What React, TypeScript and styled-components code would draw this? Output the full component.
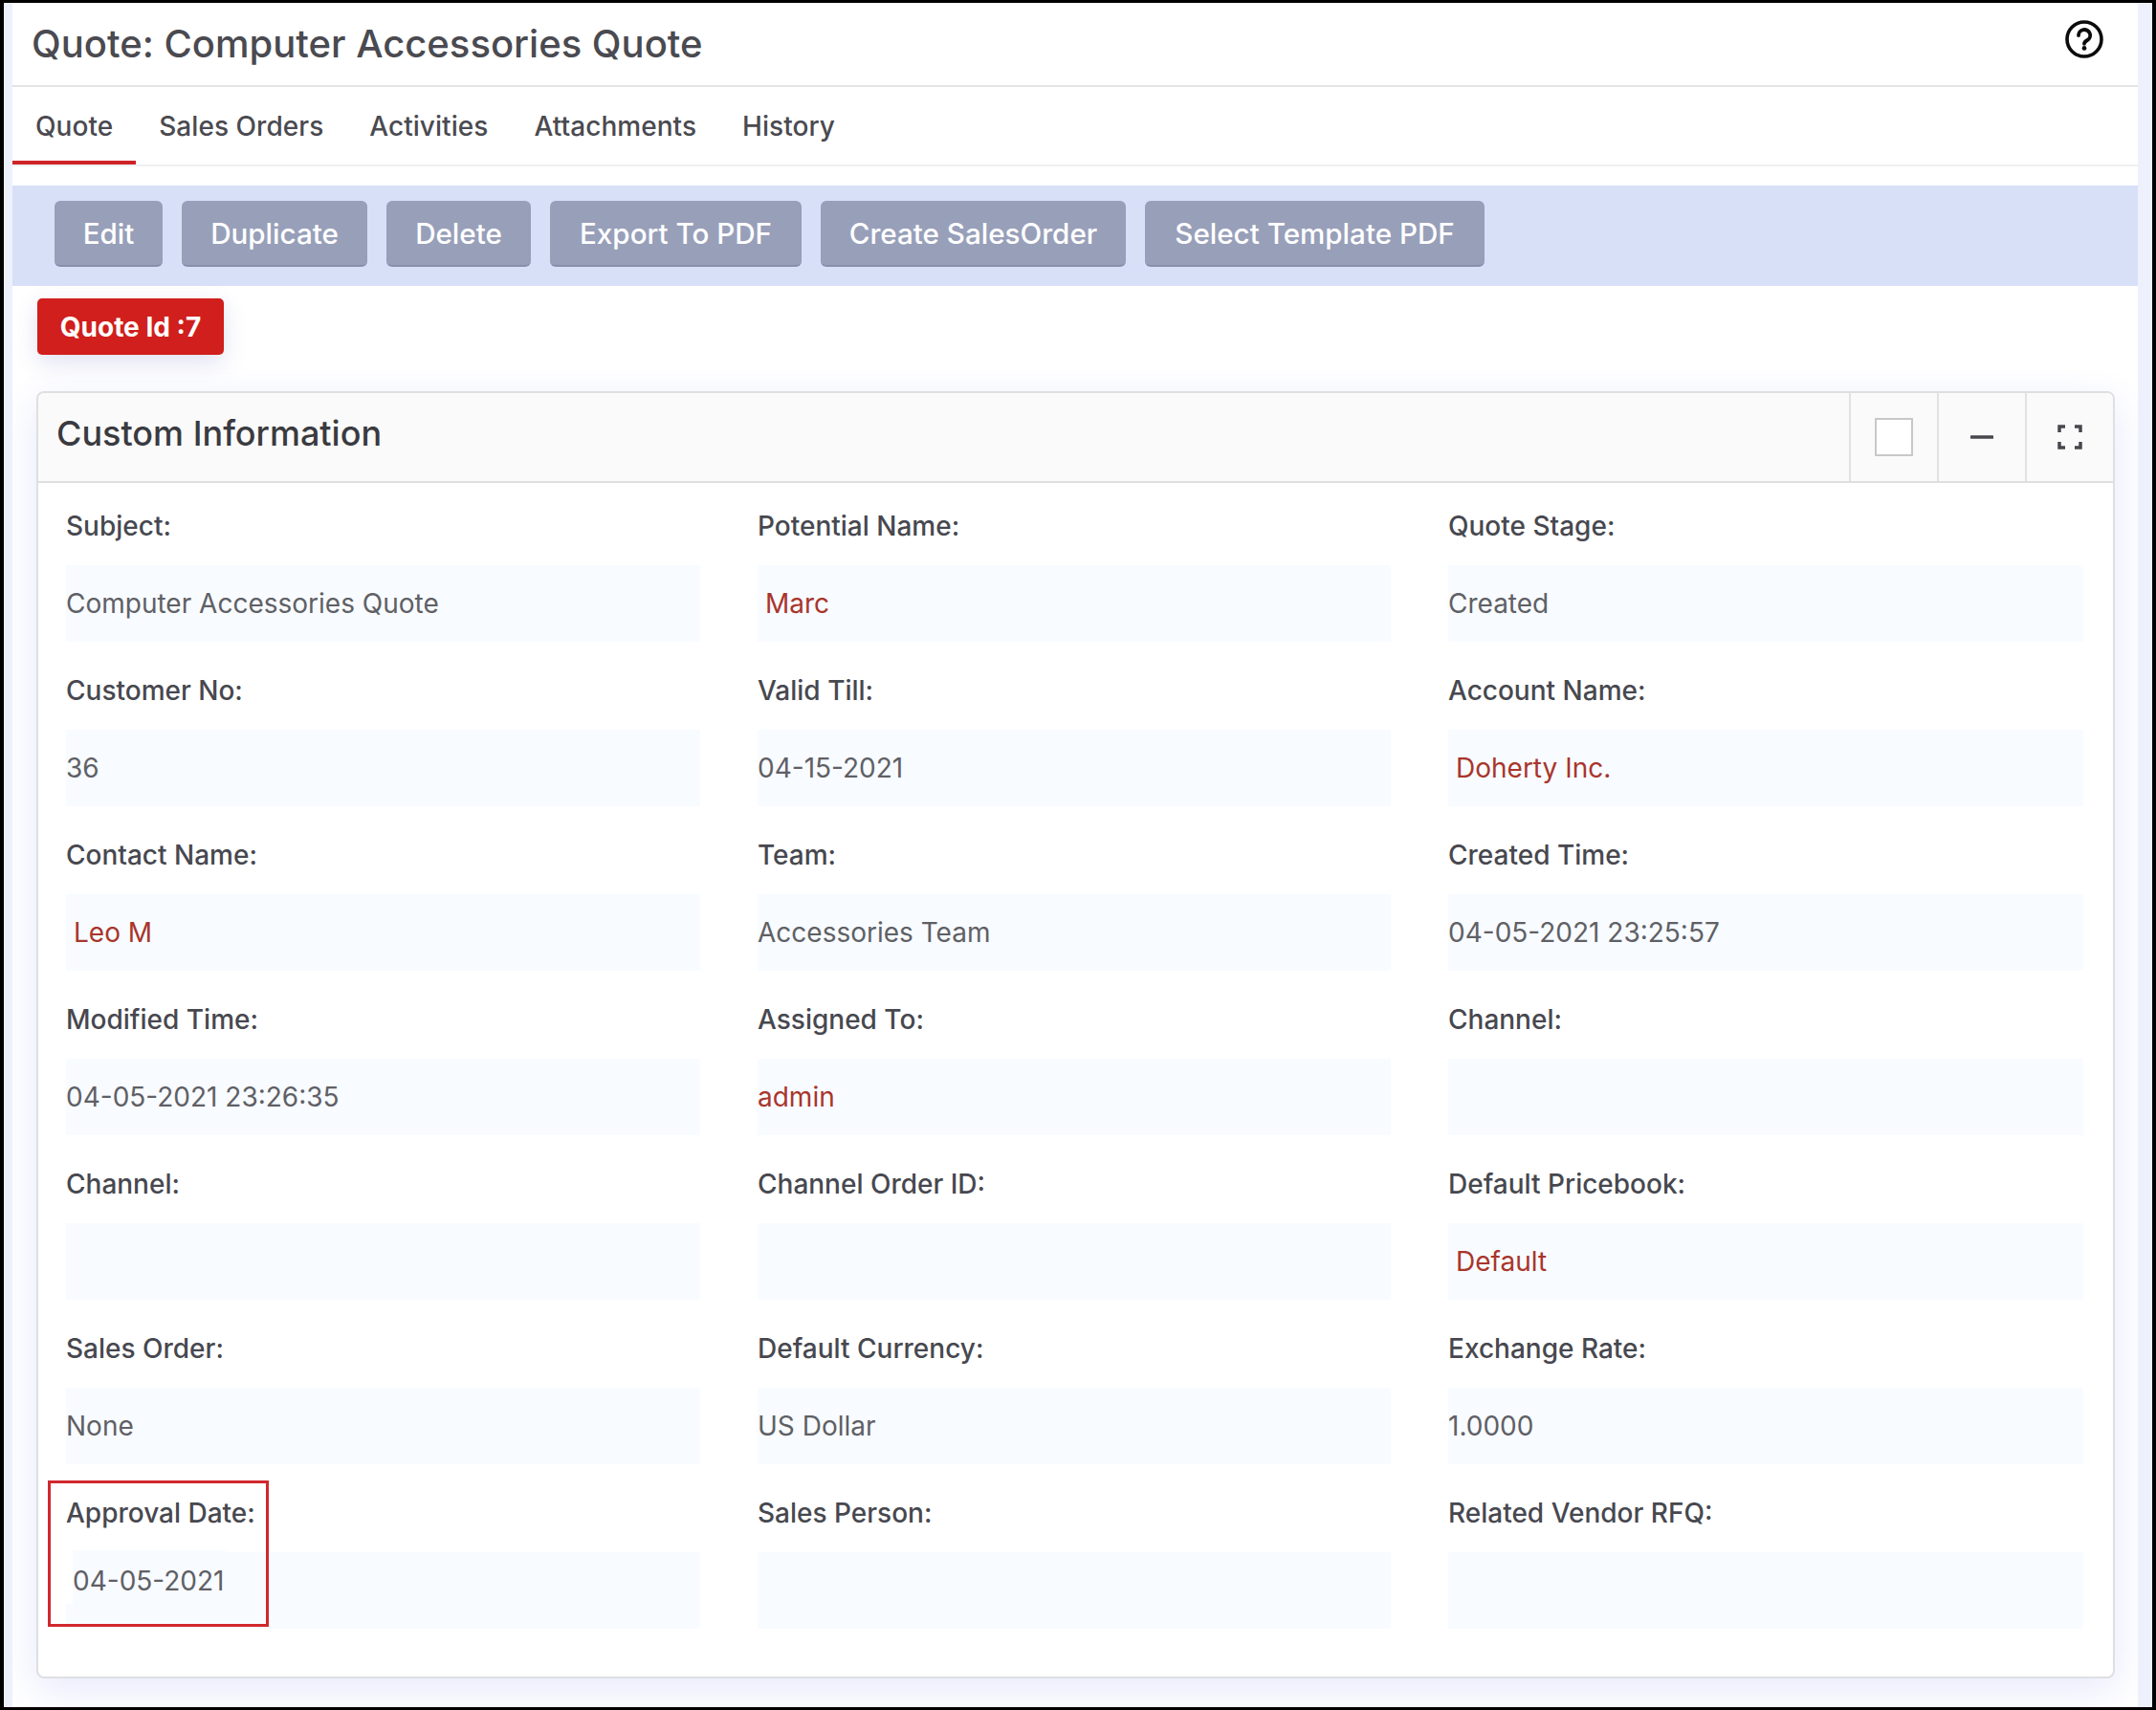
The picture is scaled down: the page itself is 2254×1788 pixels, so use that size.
import styled, { createGlobalStyle } from "styled-components";

const GlobalStyle = createGlobalStyle`
  html, body {
    margin: 0;
    padding: 0;
    background: #000;
  }
  * {
    box-sizing: border-box;
  }
`;

const Frame = styled.div`
  width: 2254px;
  height: 1788px;
  border: solid #000;
  border-width: 3px 4px;
  background: #eef1fc;
  padding-left: 9px;
  padding-right: 15px;
  font-family: Inter, "Liberation Sans", sans-serif;
  overflow: hidden;
`;

const Page = styled.div`
  height: 100%;
  display: flex;
  flex-direction: column;
  background: #fff;
  overflow: hidden;
`;

const TitleBar = styled.div`
  height: 88px;
  padding: 0 36px 2px 20px;
  display: flex;
  align-items: center;
  justify-content: space-between;
  border-bottom: 2px solid #e4e4e6;
`;

const Title = styled.h1`
  margin: 0;
  font-size: 40px;
  font-weight: 500;
  color: #4a4a50;
`;

const HelpButton = styled.svg`
  display: block;
  margin-top: -8px;
`;

const Tabs = styled.div`
  height: 83px;
  display: flex;
  border-bottom: 2px solid #f0f0f2;
`;

const Tab = styled.div<{ $active?: boolean }>`
  padding: 4px 24px 0;
  height: 81px;
  display: flex;
  align-items: center;
  font-size: 28px;
  letter-spacing: 0.05px;
  font-weight: 500;
  color: #4a4a50;
  border-bottom: 4px solid ${(p) => (p.$active ? "#cf2327" : "transparent")};
`;

const Toolbar = styled.div`
  margin-top: 20px;
  height: 105px;
  padding: 16px 44px;
  display: flex;
  gap: 20px;
  background: #d8e0f8;
`;

const ToolButton = styled.button<{ $width: number }>`
  width: ${(p) => p.$width}px;
  height: 69px;
  padding: 0;
  border: 0;
  border-bottom: 2px solid #878fab;
  border-radius: 6px;
  background: #989fb9;
  color: #fff;
  font-family: inherit;
  font-size: 29.6px;
  font-weight: 500;
`;

const IdBadge = styled.div`
  margin: 13px 0 0 26px;
  width: 195px;
  height: 59px;
  display: flex;
  align-items: center;
  justify-content: center;
  border-radius: 5px;
  background: #d01f1c;
  color: #fff;
  font-size: 28px;
  font-weight: 700;
  box-shadow: 0 8px 24px rgba(82, 90, 180, 0.18);
`;

const Card = styled.section`
  position: relative;
  margin: 38px 24px 0 25px;
  border: 2px solid #dfdfe2;
  border-radius: 8px;
  background: #fff;
  box-shadow: 0 12px 40px rgba(80, 100, 230, 0.14);
`;

const CardHeader = styled.header`
  height: 94px;
  padding-left: 19px;
  display: flex;
  align-items: center;
  justify-content: space-between;
  background: #fafafa;
  border-bottom: 2px solid #dfdfe2;
  border-radius: 6px 6px 0 0;
`;

const CardTitle = styled.h2`
  margin: 0 0 8px;
  font-size: 36px;
  font-weight: 500;
  color: #3a3a40;
`;

const HeaderActions = styled.div`
  display: flex;
  height: 100%;
`;

const HeaderAction = styled.div`
  width: 92px;
  display: flex;
  align-items: center;
  justify-content: center;
  border-left: 2px solid #e2e2e4;
`;

const CheckBox = styled.span`
  width: 40px;
  height: 40px;
  border: 2px solid #c8c8c8;
  background: #fff;
`;

const FieldGrid = styled.div`
  padding: 24px 31px 50px 29px;
  display: grid;
  grid-template-columns: 663px 662px 664px;
  column-gap: 60px;
  row-gap: 30px;
`;

const Field = styled.div``;

const Label = styled.div`
  height: 41px;
  margin-bottom: 21px;
  display: flex;
  align-items: center;
  font-size: 28px;
  font-weight: 500;
  color: #47484f;
`;

const Value = styled.div<{ $link?: boolean; $inset?: boolean }>`
  position: relative;
  height: 80px;
  display: flex;
  align-items: center;
  padding-left: ${(p) => (p.$inset ? "8px" : "0")};
  background: #f8fbff;
  font-size: 28px;
  font-weight: 400;
  color: ${(p) => (p.$link ? "#a9352c" : "#5f6065")};
`;

/* the date was pasted over the field in the source image, so it sits a bit off */
const PastedDate = styled.span`
  position: absolute;
  left: 0;
  top: -2px;
  width: 167px;
  height: 56px;
  padding: 7px 0 0 7px;
  display: flex;
  align-items: center;
  background: linear-gradient(to right, #fff 7px, #f8fbff 7px);
`;

const Callout = styled.div`
  position: absolute;
  left: 10px;
  top: 1137px;
  width: 231px;
  height: 153px;
  border: 3px solid #d0282e;
`;

const fields: { label: string; value?: string; link?: boolean; inset?: boolean; pasted?: boolean }[] = [
  { label: "Subject:", value: "Computer Accessories Quote" },
  { label: "Potential Name:", value: "Marc", link: true, inset: true },
  { label: "Quote Stage:", value: "Created" },
  { label: "Customer No:", value: "36" },
  { label: "Valid Till:", value: "04-15-2021" },
  { label: "Account Name:", value: "Doherty Inc.", link: true, inset: true },
  { label: "Contact Name:", value: "Leo M", link: true, inset: true },
  { label: "Team:", value: "Accessories Team" },
  { label: "Created Time:", value: "04-05-2021 23:25:57" },
  { label: "Modified Time:", value: "04-05-2021 23:26:35" },
  { label: "Assigned To:", value: "admin", link: true },
  { label: "Channel:" },
  { label: "Channel:" },
  { label: "Channel Order ID:" },
  { label: "Default Pricebook:", value: "Default", link: true, inset: true },
  { label: "Sales Order:", value: "None" },
  { label: "Default Currency:", value: "US Dollar" },
  { label: "Exchange Rate:", value: "1.0000" },
  { label: "Approval Date:", value: "04-05-2021", pasted: true },
  { label: "Sales Person:" },
  { label: "Related Vendor RFQ:" },
];

const tabs = ["Quote", "Sales Orders", "Activities", "Attachments", "History"];
const actions = [
  { text: "Edit", width: 113 },
  { text: "Duplicate", width: 194 },
  { text: "Delete", width: 151 },
  { text: "Export To PDF", width: 263 },
  { text: "Create SalesOrder", width: 319 },
  { text: "Select Template PDF", width: 355 },
];

export default function App() {
  return (
    <>
      <GlobalStyle />
      <Frame>
        <Page>
          <TitleBar>
            <Title>Quote: Computer Accessories Quote</Title>
            <HelpButton width="40" height="40" viewBox="0 0 40 40" fill="none">
              <circle cx="20" cy="20" r="18" stroke="#0c0c0c" strokeWidth="3.6" />
              <path
                d="M14 16a6.1 5.9 0 1 1 9.2 5c-2.2 1.3-3.2 2.1-3.2 3.8"
                stroke="#0c0c0c"
                strokeWidth="3.8"
                strokeLinecap="round"
              />
              <circle cx="20" cy="29.4" r="2.4" fill="#0c0c0c" />
            </HelpButton>
          </TitleBar>
          <Tabs>
            {tabs.map((t, i) => (
              <Tab key={t} $active={i === 0}>
                {t}
              </Tab>
            ))}
          </Tabs>
          <Toolbar>
            {actions.map((a) => (
              <ToolButton key={a.text} $width={a.width}>
                {a.text}
              </ToolButton>
            ))}
          </Toolbar>
          <IdBadge>Quote Id :7</IdBadge>
          <Card>
            <CardHeader>
              <CardTitle>Custom Information</CardTitle>
              <HeaderActions>
                <HeaderAction>
                  <CheckBox />
                </HeaderAction>
                <HeaderAction>
                  <svg width="24" height="6" viewBox="0 0 24 6">
                    <path d="M1 3h22" stroke="#47474d" strokeWidth="3.5" strokeLinecap="round" />
                  </svg>
                </HeaderAction>
                <HeaderAction>
                  <svg width="26" height="26" viewBox="0 0 26 26" fill="none">
                    <path
                      d="M2 8V2h6M18 2h6v6M2 18v6h6M18 24h6v-6"
                      stroke="#47474d"
                      strokeWidth="3.5"
                    />
                  </svg>
                </HeaderAction>
              </HeaderActions>
            </CardHeader>
            <FieldGrid>
              {fields.map((f, i) => (
                <Field key={i}>
                  <Label>{f.label}</Label>
                  <Value $link={f.link} $inset={f.inset}>
                    {f.pasted ? <PastedDate>{f.value}</PastedDate> : f.value}
                  </Value>
                </Field>
              ))}
            </FieldGrid>
            <Callout />
          </Card>
        </Page>
      </Frame>
    </>
  );
}
